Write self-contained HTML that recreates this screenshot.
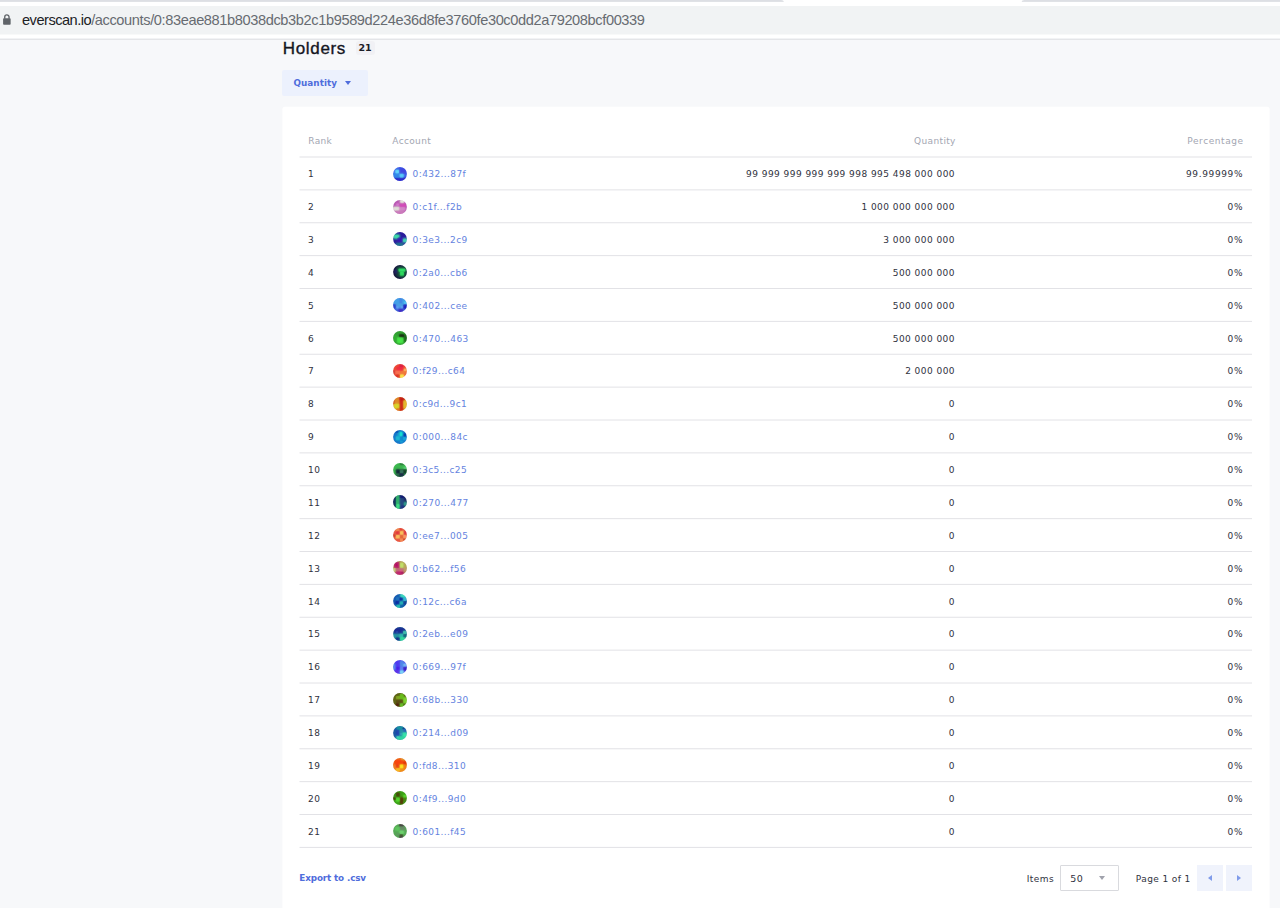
<!DOCTYPE html>
<html lang="en">
<head>
<meta charset="utf-8">
<title>Holders</title>
<style>
html,body{margin:0;padding:0}
body{width:1280px;height:908px;overflow:hidden;position:relative;background:#f7f8fa;font-family:"DejaVu Sans","Liberation Sans",sans-serif;color:#30323e}
.chrome{position:absolute;left:0;top:0}
.url{position:absolute;left:22px;top:10px;height:20px;line-height:20px;font-family:"Liberation Sans",sans-serif;font-size:14.6px;letter-spacing:-0.385px;color:#676b71;white-space:nowrap}
.url b{font-weight:normal;color:#202124;letter-spacing:-0.5px}
h1{position:absolute;left:282.8px;top:36.9px;margin:0;height:24px;line-height:24px;font-family:"Liberation Sans",sans-serif;font-size:17px;font-weight:normal;letter-spacing:.66px;color:#14161f;-webkit-text-stroke:.35px #14161f}
.badge{position:absolute;left:355.5px;top:40.5px;width:19px;height:14.5px;border-radius:3px;background:#f1f1f5;font-size:9.5px;font-weight:bold;line-height:14.5px;text-align:center;color:#1c1e28}
.btn{position:absolute;left:282px;top:69.5px;width:86px;height:26px;background:#ecf1fd;border-radius:2px}
.btn span{position:absolute;left:11.5px;top:0;line-height:26px;font-size:8.8px;font-weight:bold;color:#4f6ddc;letter-spacing:.05px}
.btn i{position:absolute;left:62.6px;top:11.4px;width:0;height:0;border-left:3.8px solid transparent;border-right:3.8px solid transparent;border-top:4.2px solid #4f6ddc}
.card{position:absolute;left:282px;top:106px;width:987.6px;height:802px}
.w{position:absolute;left:.3px;top:.6px;width:987.3px;height:802px}
.th{position:absolute;top:24px;height:20px;line-height:20px;font-size:9px;letter-spacing:.35px;color:#a3a6b2;white-space:nowrap}
.lines{position:absolute;left:0;top:0}
.row{position:absolute;left:17.7px;width:952px;height:31.8px;font-size:9px;letter-spacing:.45px;line-height:31.8px;white-space:nowrap}
.rk{position:absolute;left:8px;top:0}
.ic{position:absolute;left:93.2px;top:7.45px;width:14px;height:14px}
.ac{position:absolute;left:112.6px;top:0;color:#6483e0;letter-spacing:.4px}
.q{position:absolute;right:297px;top:0}
.p{position:absolute;right:8.9px;top:0;letter-spacing:.62px}
.exp{position:absolute;left:17px;top:761.6px;height:20px;line-height:20px;font-size:8.8px;font-weight:bold;color:#4f6ddc;letter-spacing:-.13px}
.items{position:absolute;left:744.5px;top:762px;height:20px;line-height:20px;font-size:9px;letter-spacing:.4px;color:#30323e}
.sel{position:absolute;left:778px;top:758.5px;width:56.5px;height:24px;border:1px solid #d9dade;border-radius:1px;background:#fff}
.sel span{position:absolute;left:9px;top:1px;line-height:24px;font-size:9.5px;letter-spacing:.4px}
.sel i{position:absolute;left:38.1px;top:10.3px;width:0;height:0;border-left:3.6px solid transparent;border-right:3.6px solid transparent;border-top:4px solid #a0a2ac}
.pg{position:absolute;left:853.5px;top:762px;height:20px;line-height:20px;font-size:9px;letter-spacing:.4px}
.nb{position:absolute;top:758.5px;width:25.5px;height:26px;background:#f0f3fc}
.nb i{position:absolute;top:9.6px;width:0;height:0;border-top:3.7px solid transparent;border-bottom:3.7px solid transparent}
.nb.pv{left:915px}.nb.nx{left:944px}
.nb.pv i{left:11px;border-right:4.2px solid #7f9bea}
.nb.nx i{left:10.8px;border-left:4.2px solid #7f9bea}
.r{text-align:right}
</style>
</head>
<body>
<svg width="0" height="0" style="position:absolute"><defs><clipPath id="cc"><circle cx="7" cy="7" r="6.9"/></clipPath><filter id="bl" x="-20%" y="-20%" width="140%" height="140%"><feGaussianBlur stdDeviation="0.8"/></filter></defs></svg>
<svg class="chrome" width="1280" height="41" viewBox="0 0 1280 41"><rect x="0" y="0" width="1280" height="38.6" fill="#fff"/><rect x="0" y="0" width="1280" height="1.9" fill="#dddfe4"/><path d="M781 0h243.500c-1.800 0-2.800 .9-2.800 1.900v.3h-237.900v-.3c0-1-1-1.900-2.800-1.900z" fill="#fff"/><rect x="-20" y="5.900" width="1320" height="28.650" rx="14" fill="#f1f3f4"/><rect x="0" y="38.600" width="1280" height="1.400" fill="#e4e5e8"/><g transform="translate(3.1 13.75)"><path d="M1.650 4.900V3.200a2.150 2.150 0 0 1 4.300 0V4.900" fill="none" stroke="#5f6368" stroke-width="1.350"/><rect x="0" y="4.550" width="7.550" height="6.500" rx=".8" fill="#5f6368"/></g></svg>
<div class="url"><b>everscan.io</b>/accounts/0:83eae881b8038dcb3b2c1b9589d224e36d8fe3760fe30c0dd2a79208bcf00339</div>
<h1>Holders</h1>
<div class="badge">21</div>
<div class="btn"><span>Quantity</span><i></i></div>
<div class="card">
<svg class="lines" width="998" height="802" viewBox="0 0 998 802"><rect x=".4" y=".65" width="987.2" height="900" rx="2.5" fill="#fff"/><rect x="17.5" y="50.50" width="952.5" height="1" fill="#e2e2e6"/><rect x="17.5" y="83.38" width="952.5" height="1" fill="#e2e2e6"/><rect x="17.5" y="116.25" width="952.5" height="1" fill="#e2e2e6"/><rect x="17.5" y="149.13" width="952.5" height="1" fill="#e2e2e6"/><rect x="17.5" y="182.00" width="952.5" height="1" fill="#e2e2e6"/><rect x="17.5" y="214.88" width="952.5" height="1" fill="#e2e2e6"/><rect x="17.5" y="247.76" width="952.5" height="1" fill="#e2e2e6"/><rect x="17.5" y="280.63" width="952.5" height="1" fill="#e2e2e6"/><rect x="17.5" y="313.51" width="952.5" height="1" fill="#e2e2e6"/><rect x="17.5" y="346.38" width="952.5" height="1" fill="#e2e2e6"/><rect x="17.5" y="379.26" width="952.5" height="1" fill="#e2e2e6"/><rect x="17.5" y="412.14" width="952.5" height="1" fill="#e2e2e6"/><rect x="17.5" y="445.01" width="952.5" height="1" fill="#e2e2e6"/><rect x="17.5" y="477.89" width="952.5" height="1" fill="#e2e2e6"/><rect x="17.5" y="510.76" width="952.5" height="1" fill="#e2e2e6"/><rect x="17.5" y="543.64" width="952.5" height="1" fill="#e2e2e6"/><rect x="17.5" y="576.52" width="952.5" height="1" fill="#e2e2e6"/><rect x="17.5" y="609.39" width="952.5" height="1" fill="#e2e2e6"/><rect x="17.5" y="642.27" width="952.5" height="1" fill="#e2e2e6"/><rect x="17.5" y="675.14" width="952.5" height="1" fill="#e2e2e6"/><rect x="17.5" y="708.02" width="952.5" height="1" fill="#e2e2e6"/><rect x="17.5" y="740.90" width="952.5" height="1" fill="#e2e2e6"/></svg>
<div class="w">
<div class="th" style="left:26px">Rank</div><div class="th" style="left:110px">Account</div><div class="th r" style="right:313.8px">Quantity</div><div class="th r" style="right:25.9px;letter-spacing:.58px">Percentage</div>
<div class="row" style="top:52.60px"><span class="rk">1</span><svg class="ic" viewBox="0 0 14 14"><g clip-path="url(#cc)"><g filter="url(#bl)"><rect x="-2" y="-2" width="18" height="18" fill="#3a5ce6"/><rect x="6.4" y="1" width="7.2" height="5.8" rx=".7" fill="#4048e0"/><rect x="0" y="10.7" width="14" height="3.3" rx=".7" fill="#2a20c8"/><rect x="0.5" y="6.2" width="5.9" height="4.5" rx=".7" fill="#3088e8"/><rect x="2.4" y="2.9" width="3.6" height="3.3" rx=".7" fill="#66e2ff"/><rect x="6.7" y="6.8" width="3.9" height="3.6" rx=".7" fill="#5cd4fa"/></g><g opacity=".5"><rect x="6.4" y="1" width="7.2" height="5.8" rx=".7" fill="#4048e0"/><rect x="0" y="10.7" width="14" height="3.3" rx=".7" fill="#2a20c8"/><rect x="0.5" y="6.2" width="5.9" height="4.5" rx=".7" fill="#3088e8"/><rect x="2.4" y="2.9" width="3.6" height="3.3" rx=".7" fill="#66e2ff"/><rect x="6.7" y="6.8" width="3.9" height="3.6" rx=".7" fill="#5cd4fa"/></g></g></svg><span class="ac">0:432...87f</span><span class="q">99 999 999 999 999 998 995 498 000 000</span><span class="p">99.99999%</span></div>
<div class="row" style="top:85.48px"><span class="rk">2</span><svg class="ic" viewBox="0 0 14 14"><g clip-path="url(#cc)"><g filter="url(#bl)"><rect x="-2" y="-2" width="18" height="18" fill="#b656b0"/><rect x="7.2" y="0" width="3.8" height="2.8" rx=".7" fill="#eaf6e4"/><rect x="3.2" y="3.4" width="2.8" height="2" rx=".7" fill="#e080d8"/><rect x="6.8" y="3.4" width="6" height="3.6" rx=".7" fill="#d248b8"/><rect x="0" y="7" width="6.4" height="3.4" rx=".7" fill="#e2e6da"/><rect x="6.6" y="7.2" width="5.8" height="3.2" rx=".7" fill="#d48aca"/><rect x="2.8" y="10.8" width="8.5" height="3.2" rx=".7" fill="#cc7cbc"/></g><g opacity=".5"><rect x="7.2" y="0" width="3.8" height="2.8" rx=".7" fill="#eaf6e4"/><rect x="3.2" y="3.4" width="2.8" height="2" rx=".7" fill="#e080d8"/><rect x="6.8" y="3.4" width="6" height="3.6" rx=".7" fill="#d248b8"/><rect x="0" y="7" width="6.4" height="3.4" rx=".7" fill="#e2e6da"/><rect x="6.6" y="7.2" width="5.8" height="3.2" rx=".7" fill="#d48aca"/><rect x="2.8" y="10.8" width="8.5" height="3.2" rx=".7" fill="#cc7cbc"/></g></g></svg><span class="ac">0:c1f...f2b</span><span class="q">1 000 000 000 000</span><span class="p">0%</span></div>
<div class="row" style="top:118.35px"><span class="rk">3</span><svg class="ic" viewBox="0 0 14 14"><g clip-path="url(#cc)"><g filter="url(#bl)"><rect x="-2" y="-2" width="18" height="18" fill="#2a1c9c"/><rect x="2.9" y="11.2" width="7.5" height="2.8" rx=".7" fill="#207890"/><rect x="0.6" y="2.9" width="5.6" height="3.3" rx=".7" fill="#40e8a8"/><rect x="10" y="6.8" width="4" height="3.2" rx=".7" fill="#48e0b8"/><rect x="4.5" y="5.5" width="5" height="4.5" rx=".7" fill="#3818b0"/></g><g opacity=".5"><rect x="2.9" y="11.2" width="7.5" height="2.8" rx=".7" fill="#207890"/><rect x="0.6" y="2.9" width="5.6" height="3.3" rx=".7" fill="#40e8a8"/><rect x="10" y="6.8" width="4" height="3.2" rx=".7" fill="#48e0b8"/><rect x="4.5" y="5.5" width="5" height="4.5" rx=".7" fill="#3818b0"/></g></g></svg><span class="ac">0:3e3...2c9</span><span class="q">3 000 000 000</span><span class="p">0%</span></div>
<div class="row" style="top:151.23px"><span class="rk">4</span><svg class="ic" viewBox="0 0 14 14"><g clip-path="url(#cc)"><g filter="url(#bl)"><rect x="-2" y="-2" width="18" height="18" fill="#15123e"/><rect x="3.5" y="2" width="10" height="9.5" rx=".7" fill="#173c3a"/><rect x="1.6" y="4.5" width="2.6" height="4" rx=".7" fill="#222264"/><rect x="5.5" y="3.6" width="7" height="3.2" rx=".7" fill="#30e868"/><rect x="6.8" y="6.8" width="4.2" height="3.9" rx=".7" fill="#2ee060"/></g><g opacity=".5"><rect x="3.5" y="2" width="10" height="9.5" rx=".7" fill="#173c3a"/><rect x="1.6" y="4.5" width="2.6" height="4" rx=".7" fill="#222264"/><rect x="5.5" y="3.6" width="7" height="3.2" rx=".7" fill="#30e868"/><rect x="6.8" y="6.8" width="4.2" height="3.9" rx=".7" fill="#2ee060"/></g></g></svg><span class="ac">0:2a0...cb6</span><span class="q">500 000 000</span><span class="p">0%</span></div>
<div class="row" style="top:184.10px"><span class="rk">5</span><svg class="ic" viewBox="0 0 14 14"><g clip-path="url(#cc)"><g filter="url(#bl)"><rect x="-2" y="-2" width="18" height="18" fill="#3a62dc"/><rect x="0" y="0" width="14" height="6" rx=".7" fill="#42a0e8"/><rect x="6.4" y="0.6" width="2.8" height="5" rx=".7" fill="#4484e2"/><rect x="10.8" y="3.4" width="3" height="2.6" rx=".7" fill="#52ccf2"/><rect x="3.2" y="5.5" width="7" height="4" rx=".7" fill="#48a0e2"/><rect x="3.2" y="8.2" width="2.4" height="2.2" rx=".7" fill="#6aa8f8"/><rect x="7.8" y="8" width="2.4" height="2.2" rx=".7" fill="#6aa8f8"/><rect x="0" y="6.2" width="2.6" height="4" rx=".7" fill="#2838c8"/><rect x="10.4" y="6.6" width="3.6" height="4" rx=".7" fill="#1a12b8"/><rect x="5.5" y="11.2" width="4.5" height="2.8" rx=".7" fill="#4222c0"/></g><g opacity=".5"><rect x="0" y="0" width="14" height="6" rx=".7" fill="#42a0e8"/><rect x="6.4" y="0.6" width="2.8" height="5" rx=".7" fill="#4484e2"/><rect x="10.8" y="3.4" width="3" height="2.6" rx=".7" fill="#52ccf2"/><rect x="3.2" y="5.5" width="7" height="4" rx=".7" fill="#48a0e2"/><rect x="3.2" y="8.2" width="2.4" height="2.2" rx=".7" fill="#6aa8f8"/><rect x="7.8" y="8" width="2.4" height="2.2" rx=".7" fill="#6aa8f8"/><rect x="0" y="6.2" width="2.6" height="4" rx=".7" fill="#2838c8"/><rect x="10.4" y="6.6" width="3.6" height="4" rx=".7" fill="#1a12b8"/><rect x="5.5" y="11.2" width="4.5" height="2.8" rx=".7" fill="#4222c0"/></g></g></svg><span class="ac">0:402...cee</span><span class="q">500 000 000</span><span class="p">0%</span></div>
<div class="row" style="top:216.98px"><span class="rk">6</span><svg class="ic" viewBox="0 0 14 14"><g clip-path="url(#cc)"><g filter="url(#bl)"><rect x="-2" y="-2" width="18" height="18" fill="#30a030"/><rect x="0" y="4" width="4" height="6" rx=".7" fill="#34ac34"/><rect x="11" y="3.6" width="3" height="7.1" rx=".7" fill="#1c601c"/><rect x="6.2" y="3.2" width="4.8" height="3" rx=".7" fill="#181810"/><rect x="4.2" y="6.5" width="5.8" height="5.5" rx=".7" fill="#48e848"/></g><g opacity=".5"><rect x="0" y="4" width="4" height="6" rx=".7" fill="#34ac34"/><rect x="11" y="3.6" width="3" height="7.1" rx=".7" fill="#1c601c"/><rect x="6.2" y="3.2" width="4.8" height="3" rx=".7" fill="#181810"/><rect x="4.2" y="6.5" width="5.8" height="5.5" rx=".7" fill="#48e848"/></g></g></svg><span class="ac">0:470...463</span><span class="q">500 000 000</span><span class="p">0%</span></div>
<div class="row" style="top:249.86px"><span class="rk">7</span><svg class="ic" viewBox="0 0 14 14"><g clip-path="url(#cc)"><g filter="url(#bl)"><rect x="-2" y="-2" width="18" height="18" fill="#ec4a34"/><rect x="6.6" y="0.6" width="3.4" height="2.8" rx=".7" fill="#d81848"/><rect x="3.6" y="3" width="6.8" height="3.4" rx=".7" fill="#f02a42"/><rect x="10.8" y="4.7" width="2.8" height="2.4" rx=".7" fill="#fcc462"/><rect x="2.1" y="6.8" width="5.3" height="3.4" rx=".7" fill="#fa7252"/><rect x="7.4" y="7" width="6" height="3.2" rx=".7" fill="#f07a3a"/><rect x="3.2" y="10.6" width="3.6" height="3" rx=".7" fill="#d83222"/><rect x="7" y="10.6" width="3.8" height="3.4" rx=".7" fill="#fcf050"/><rect x="0" y="6.4" width="2.1" height="3.4" rx=".7" fill="#d03a3a"/></g><g opacity=".5"><rect x="6.6" y="0.6" width="3.4" height="2.8" rx=".7" fill="#d81848"/><rect x="3.6" y="3" width="6.8" height="3.4" rx=".7" fill="#f02a42"/><rect x="10.8" y="4.7" width="2.8" height="2.4" rx=".7" fill="#fcc462"/><rect x="2.1" y="6.8" width="5.3" height="3.4" rx=".7" fill="#fa7252"/><rect x="7.4" y="7" width="6" height="3.2" rx=".7" fill="#f07a3a"/><rect x="3.2" y="10.6" width="3.6" height="3" rx=".7" fill="#d83222"/><rect x="7" y="10.6" width="3.8" height="3.4" rx=".7" fill="#fcf050"/><rect x="0" y="6.4" width="2.1" height="3.4" rx=".7" fill="#d03a3a"/></g></g></svg><span class="ac">0:f29...c64</span><span class="q">2 000 000</span><span class="p">0%</span></div>
<div class="row" style="top:282.73px"><span class="rk">8</span><svg class="ic" viewBox="0 0 14 14"><g clip-path="url(#cc)"><g filter="url(#bl)"><rect x="-2" y="-2" width="18" height="18" fill="#dc7c24"/><rect x="0" y="3" width="2.2" height="4" rx=".7" fill="#c84424"/><rect x="1.5" y="1.3" width="5.1" height="5.5" rx=".7" fill="#e08a2a"/><rect x="1" y="6.8" width="5.6" height="4.7" rx=".7" fill="#d8d82a"/><rect x="6.6" y="0" width="3.6" height="14" rx=".7" fill="#cc1c1a"/><rect x="6.4" y="0.2" width="5.3" height="3" rx=".7" fill="#c01218"/><rect x="10.4" y="3.4" width="3.2" height="8.1" rx=".7" fill="#e4c032"/><rect x="3.5" y="11.5" width="3.2" height="2.5" rx=".7" fill="#e07222"/></g><g opacity=".5"><rect x="0" y="3" width="2.2" height="4" rx=".7" fill="#c84424"/><rect x="1.5" y="1.3" width="5.1" height="5.5" rx=".7" fill="#e08a2a"/><rect x="1" y="6.8" width="5.6" height="4.7" rx=".7" fill="#d8d82a"/><rect x="6.6" y="0" width="3.6" height="14" rx=".7" fill="#cc1c1a"/><rect x="6.4" y="0.2" width="5.3" height="3" rx=".7" fill="#c01218"/><rect x="10.4" y="3.4" width="3.2" height="8.1" rx=".7" fill="#e4c032"/><rect x="3.5" y="11.5" width="3.2" height="2.5" rx=".7" fill="#e07222"/></g></g></svg><span class="ac">0:c9d...9c1</span><span class="q">0</span><span class="p">0%</span></div>
<div class="row" style="top:315.61px"><span class="rk">9</span><svg class="ic" viewBox="0 0 14 14"><g clip-path="url(#cc)"><g filter="url(#bl)"><rect x="-2" y="-2" width="18" height="18" fill="#1274ca"/><rect x="2.8" y="1.2" width="2.8" height="1.6" rx=".7" fill="#0a3aa8"/><rect x="4.5" y="2.6" width="2.2" height="3.4" rx=".7" fill="#1aa0d0"/><rect x="6.7" y="2.1" width="2.6" height="4" rx=".7" fill="#12f0d0"/><rect x="10.7" y="3.4" width="2.3" height="3" rx=".7" fill="#0a2aa8"/><rect x="2.8" y="6.2" width="4" height="4" rx=".7" fill="#1cbcd4"/><rect x="7" y="7.2" width="3.2" height="3.4" rx=".7" fill="#108ad0"/><rect x="10.2" y="7" width="2.8" height="3" rx=".7" fill="#18b0e0"/><rect x="7" y="10.8" width="3" height="1.8" rx=".7" fill="#18a8d8"/></g><g opacity=".5"><rect x="2.8" y="1.2" width="2.8" height="1.6" rx=".7" fill="#0a3aa8"/><rect x="4.5" y="2.6" width="2.2" height="3.4" rx=".7" fill="#1aa0d0"/><rect x="6.7" y="2.1" width="2.6" height="4" rx=".7" fill="#12f0d0"/><rect x="10.7" y="3.4" width="2.3" height="3" rx=".7" fill="#0a2aa8"/><rect x="2.8" y="6.2" width="4" height="4" rx=".7" fill="#1cbcd4"/><rect x="7" y="7.2" width="3.2" height="3.4" rx=".7" fill="#108ad0"/><rect x="10.2" y="7" width="2.8" height="3" rx=".7" fill="#18b0e0"/><rect x="7" y="10.8" width="3" height="1.8" rx=".7" fill="#18a8d8"/></g></g></svg><span class="ac">0:000...84c</span><span class="q">0</span><span class="p">0%</span></div>
<div class="row" style="top:348.48px"><span class="rk">10</span><svg class="ic" viewBox="0 0 14 14"><g clip-path="url(#cc)"><g filter="url(#bl)"><rect x="-2" y="-2" width="18" height="18" fill="#3cb850"/><rect x="6.8" y="0.2" width="4" height="1.7" rx=".7" fill="#2a7038"/><rect x="10.6" y="4" width="3" height="2.2" rx=".7" fill="#5ad27a"/><rect x="2.8" y="6.6" width="11.2" height="7.4" rx=".7" fill="#1a3a38"/><rect x="3.2" y="6.6" width="3.4" height="3.6" rx=".7" fill="#101838"/><rect x="10.4" y="6.4" width="3.6" height="3.8" rx=".7" fill="#0e3a20"/><rect x="6.8" y="7.2" width="3.6" height="3" rx=".7" fill="#3a7a62"/><rect x="2.8" y="10.4" width="3.8" height="2" rx=".7" fill="#2f7252"/><rect x="6.8" y="10.6" width="4" height="3.4" rx=".7" fill="#182048"/><rect x="10.8" y="10.4" width="2.2" height="2" rx=".7" fill="#30a050"/></g><g opacity=".5"><rect x="6.8" y="0.2" width="4" height="1.7" rx=".7" fill="#2a7038"/><rect x="10.6" y="4" width="3" height="2.2" rx=".7" fill="#5ad27a"/><rect x="2.8" y="6.6" width="11.2" height="7.4" rx=".7" fill="#1a3a38"/><rect x="3.2" y="6.6" width="3.4" height="3.6" rx=".7" fill="#101838"/><rect x="10.4" y="6.4" width="3.6" height="3.8" rx=".7" fill="#0e3a20"/><rect x="6.8" y="7.2" width="3.6" height="3" rx=".7" fill="#3a7a62"/><rect x="2.8" y="10.4" width="3.8" height="2" rx=".7" fill="#2f7252"/><rect x="6.8" y="10.6" width="4" height="3.4" rx=".7" fill="#182048"/><rect x="10.8" y="10.4" width="2.2" height="2" rx=".7" fill="#30a050"/></g></g></svg><span class="ac">0:3c5...c25</span><span class="q">0</span><span class="p">0%</span></div>
<div class="row" style="top:381.36px"><span class="rk">11</span><svg class="ic" viewBox="0 0 14 14"><g clip-path="url(#cc)"><g filter="url(#bl)"><rect x="-2" y="-2" width="18" height="18" fill="#1a2c64"/><rect x="0" y="0" width="3" height="14" rx=".7" fill="#102858"/><rect x="3" y="0" width="3.6" height="14" rx=".7" fill="#30b46c"/><rect x="3.4" y="9.1" width="3.2" height="4.3" rx=".7" fill="#40e888"/><rect x="6.6" y="0.4" width="3.8" height="2.8" rx=".7" fill="#101078"/><rect x="6.6" y="3.2" width="4.2" height="7.2" rx=".7" fill="#284a82"/><rect x="10.8" y="7.2" width="3" height="3.2" rx=".7" fill="#30a890"/><rect x="6.8" y="10.4" width="4" height="3.2" rx=".7" fill="#203088"/></g><g opacity=".5"><rect x="0" y="0" width="3" height="14" rx=".7" fill="#102858"/><rect x="3" y="0" width="3.6" height="14" rx=".7" fill="#30b46c"/><rect x="3.4" y="9.1" width="3.2" height="4.3" rx=".7" fill="#40e888"/><rect x="6.6" y="0.4" width="3.8" height="2.8" rx=".7" fill="#101078"/><rect x="6.6" y="3.2" width="4.2" height="7.2" rx=".7" fill="#284a82"/><rect x="10.8" y="7.2" width="3" height="3.2" rx=".7" fill="#30a890"/><rect x="6.8" y="10.4" width="4" height="3.2" rx=".7" fill="#203088"/></g></g></svg><span class="ac">0:270...477</span><span class="q">0</span><span class="p">0%</span></div>
<div class="row" style="top:414.24px"><span class="rk">12</span><svg class="ic" viewBox="0 0 14 14"><g clip-path="url(#cc)"><g filter="url(#bl)"><rect x="-2" y="-2" width="18" height="18" fill="#e85c44"/><rect x="2.6" y="0.6" width="4" height="2.4" rx=".7" fill="#f09252"/><rect x="6.6" y="0.2" width="2.6" height="2.2" rx=".7" fill="#e03232"/><rect x="3.2" y="3.2" width="3.4" height="3.4" rx=".7" fill="#e02a3a"/><rect x="7" y="3.2" width="3.4" height="3.4" rx=".7" fill="#fcd262"/><rect x="10.8" y="3.2" width="2.8" height="3.4" rx=".7" fill="#d82a42"/><rect x="0" y="6.6" width="2.6" height="2.6" rx=".7" fill="#c83228"/><rect x="2.8" y="7" width="3.8" height="3.4" rx=".7" fill="#fcc862"/><rect x="7" y="7" width="3" height="3.4" rx=".7" fill="#e06232"/><rect x="10.4" y="7" width="2.8" height="3.4" rx=".7" fill="#fca26a"/><rect x="3.2" y="10.8" width="3.8" height="2.6" rx=".7" fill="#e85242"/><rect x="7" y="10.4" width="3" height="3" rx=".7" fill="#f8925a"/><rect x="10" y="10.4" width="2.6" height="2.2" rx=".7" fill="#c84222"/></g><g opacity=".5"><rect x="2.6" y="0.6" width="4" height="2.4" rx=".7" fill="#f09252"/><rect x="6.6" y="0.2" width="2.6" height="2.2" rx=".7" fill="#e03232"/><rect x="3.2" y="3.2" width="3.4" height="3.4" rx=".7" fill="#e02a3a"/><rect x="7" y="3.2" width="3.4" height="3.4" rx=".7" fill="#fcd262"/><rect x="10.8" y="3.2" width="2.8" height="3.4" rx=".7" fill="#d82a42"/><rect x="0" y="6.6" width="2.6" height="2.6" rx=".7" fill="#c83228"/><rect x="2.8" y="7" width="3.8" height="3.4" rx=".7" fill="#fcc862"/><rect x="7" y="7" width="3" height="3.4" rx=".7" fill="#e06232"/><rect x="10.4" y="7" width="2.8" height="3.4" rx=".7" fill="#fca26a"/><rect x="3.2" y="10.8" width="3.8" height="2.6" rx=".7" fill="#e85242"/><rect x="7" y="10.4" width="3" height="3" rx=".7" fill="#f8925a"/><rect x="10" y="10.4" width="2.6" height="2.2" rx=".7" fill="#c84222"/></g></g></svg><span class="ac">0:ee7...005</span><span class="q">0</span><span class="p">0%</span></div>
<div class="row" style="top:447.11px"><span class="rk">13</span><svg class="ic" viewBox="0 0 14 14"><g clip-path="url(#cc)"><g filter="url(#bl)"><rect x="-2" y="-2" width="18" height="18" fill="#b4905c"/><rect x="1" y="1" width="5.6" height="6" rx=".7" fill="#b80a68"/><rect x="6.6" y="0.2" width="7" height="7" rx=".7" fill="#b4aa5a"/><rect x="7" y="1.7" width="3.4" height="5.1" rx=".7" fill="#c2e66a"/><rect x="10.4" y="6.8" width="3.6" height="3.8" rx=".7" fill="#c09a6a"/><rect x="0" y="7" width="2.6" height="3.6" rx=".7" fill="#c8e082"/><rect x="2.6" y="7.2" width="8" height="3" rx=".7" fill="#c06a7a"/><rect x="6.4" y="9" width="2.8" height="1.8" rx=".7" fill="#e0628a"/><rect x="2.6" y="10.6" width="8" height="3.4" rx=".7" fill="#c01a72"/><rect x="8.2" y="11" width="2.2" height="1.8" rx=".7" fill="#a00a5a"/></g><g opacity=".5"><rect x="1" y="1" width="5.6" height="6" rx=".7" fill="#b80a68"/><rect x="6.6" y="0.2" width="7" height="7" rx=".7" fill="#b4aa5a"/><rect x="7" y="1.7" width="3.4" height="5.1" rx=".7" fill="#c2e66a"/><rect x="10.4" y="6.8" width="3.6" height="3.8" rx=".7" fill="#c09a6a"/><rect x="0" y="7" width="2.6" height="3.6" rx=".7" fill="#c8e082"/><rect x="2.6" y="7.2" width="8" height="3" rx=".7" fill="#c06a7a"/><rect x="6.4" y="9" width="2.8" height="1.8" rx=".7" fill="#e0628a"/><rect x="2.6" y="10.6" width="8" height="3.4" rx=".7" fill="#c01a72"/><rect x="8.2" y="11" width="2.2" height="1.8" rx=".7" fill="#a00a5a"/></g></g></svg><span class="ac">0:b62...f56</span><span class="q">0</span><span class="p">0%</span></div>
<div class="row" style="top:479.99px"><span class="rk">14</span><svg class="ic" viewBox="0 0 14 14"><g clip-path="url(#cc)"><g filter="url(#bl)"><rect x="-2" y="-2" width="18" height="18" fill="#1858b0"/><rect x="3" y="3.2" width="3.6" height="3" rx=".7" fill="#2078c0"/><rect x="6.6" y="3.4" width="3" height="2.8" rx=".7" fill="#0818a0"/><rect x="2.6" y="7" width="3.6" height="3.4" rx=".7" fill="#0820a0"/><rect x="7.4" y="0" width="6.2" height="3.2" rx=".7" fill="#40e0c0"/><rect x="10.4" y="3.6" width="2.8" height="3.4" rx=".7" fill="#38c8d8"/><rect x="6.8" y="7.4" width="3.2" height="3" rx=".7" fill="#28c0b8"/><rect x="10.4" y="7" width="3.6" height="3.4" rx=".7" fill="#103890"/><rect x="3.6" y="10.8" width="3.4" height="3.2" rx=".7" fill="#28c8b0"/><rect x="7" y="10.8" width="4" height="3" rx=".7" fill="#1060a8"/></g><g opacity=".5"><rect x="3" y="3.2" width="3.6" height="3" rx=".7" fill="#2078c0"/><rect x="6.6" y="3.4" width="3" height="2.8" rx=".7" fill="#0818a0"/><rect x="2.6" y="7" width="3.6" height="3.4" rx=".7" fill="#0820a0"/><rect x="7.4" y="0" width="6.2" height="3.2" rx=".7" fill="#40e0c0"/><rect x="10.4" y="3.6" width="2.8" height="3.4" rx=".7" fill="#38c8d8"/><rect x="6.8" y="7.4" width="3.2" height="3" rx=".7" fill="#28c0b8"/><rect x="10.4" y="7" width="3.6" height="3.4" rx=".7" fill="#103890"/><rect x="3.6" y="10.8" width="3.4" height="3.2" rx=".7" fill="#28c8b0"/><rect x="7" y="10.8" width="4" height="3" rx=".7" fill="#1060a8"/></g></g></svg><span class="ac">0:12c...c6a</span><span class="q">0</span><span class="p">0%</span></div>
<div class="row" style="top:512.86px"><span class="rk">15</span><svg class="ic" viewBox="0 0 14 14"><g clip-path="url(#cc)"><g filter="url(#bl)"><rect x="-2" y="-2" width="18" height="18" fill="#2898a0"/><rect x="0" y="0" width="14" height="6.4" rx=".7" fill="#1a2a92"/><rect x="2.8" y="4" width="2.2" height="2" rx=".7" fill="#2848b0"/><rect x="10" y="3.7" width="3.6" height="3.3" rx=".7" fill="#40c8b0"/><rect x="6.6" y="6.7" width="3.6" height="3.2" rx=".7" fill="#30b8b0"/><rect x="10.4" y="7" width="3.6" height="3.5" rx=".7" fill="#105878"/><rect x="2.8" y="10.5" width="3.8" height="3.2" rx=".7" fill="#101888"/><rect x="7" y="10" width="3.8" height="3.6" rx=".7" fill="#30e098"/><rect x="10.8" y="10.4" width="2.4" height="2.2" rx=".7" fill="#48d8a8"/></g><g opacity=".5"><rect x="0" y="0" width="14" height="6.4" rx=".7" fill="#1a2a92"/><rect x="2.8" y="4" width="2.2" height="2" rx=".7" fill="#2848b0"/><rect x="10" y="3.7" width="3.6" height="3.3" rx=".7" fill="#40c8b0"/><rect x="6.6" y="6.7" width="3.6" height="3.2" rx=".7" fill="#30b8b0"/><rect x="10.4" y="7" width="3.6" height="3.5" rx=".7" fill="#105878"/><rect x="2.8" y="10.5" width="3.8" height="3.2" rx=".7" fill="#101888"/><rect x="7" y="10" width="3.8" height="3.6" rx=".7" fill="#30e098"/><rect x="10.8" y="10.4" width="2.4" height="2.2" rx=".7" fill="#48d8a8"/></g></g></svg><span class="ac">0:2eb...e09</span><span class="q">0</span><span class="p">0%</span></div>
<div class="row" style="top:545.74px"><span class="rk">16</span><svg class="ic" viewBox="0 0 14 14"><g clip-path="url(#cc)"><g filter="url(#bl)"><rect x="-2" y="-2" width="18" height="18" fill="#5648ec"/><rect x="0" y="4" width="2.6" height="5.6" rx=".7" fill="#5890e8"/><rect x="2.6" y="1" width="4.4" height="10" rx=".7" fill="#5038f0"/><rect x="3.2" y="6.7" width="3.4" height="3" rx=".7" fill="#4818e8"/><rect x="7" y="1" width="3.8" height="5.7" rx=".7" fill="#5088e8"/><rect x="10.4" y="3.7" width="3" height="3" rx=".7" fill="#78c8f8"/><rect x="7" y="6.7" width="3.4" height="3.8" rx=".7" fill="#6080f8"/><rect x="10.4" y="6.7" width="3.6" height="3.8" rx=".7" fill="#3810c0"/><rect x="7" y="10.5" width="3.4" height="3.2" rx=".7" fill="#80e8f8"/><rect x="1.5" y="10.5" width="5" height="2.6" rx=".7" fill="#6030e8"/></g><g opacity=".5"><rect x="0" y="4" width="2.6" height="5.6" rx=".7" fill="#5890e8"/><rect x="2.6" y="1" width="4.4" height="10" rx=".7" fill="#5038f0"/><rect x="3.2" y="6.7" width="3.4" height="3" rx=".7" fill="#4818e8"/><rect x="7" y="1" width="3.8" height="5.7" rx=".7" fill="#5088e8"/><rect x="10.4" y="3.7" width="3" height="3" rx=".7" fill="#78c8f8"/><rect x="7" y="6.7" width="3.4" height="3.8" rx=".7" fill="#6080f8"/><rect x="10.4" y="6.7" width="3.6" height="3.8" rx=".7" fill="#3810c0"/><rect x="7" y="10.5" width="3.4" height="3.2" rx=".7" fill="#80e8f8"/><rect x="1.5" y="10.5" width="5" height="2.6" rx=".7" fill="#6030e8"/></g></g></svg><span class="ac">0:669...97f</span><span class="q">0</span><span class="p">0%</span></div>
<div class="row" style="top:578.62px"><span class="rk">17</span><svg class="ic" viewBox="0 0 14 14"><g clip-path="url(#cc)"><g filter="url(#bl)"><rect x="-2" y="-2" width="18" height="18" fill="#62701a"/><rect x="0" y="0" width="14" height="3.2" rx=".7" fill="#5a5c12"/><rect x="0" y="3" width="3" height="8" rx=".7" fill="#5e6414"/><rect x="3" y="3.1" width="4" height="3.4" rx=".7" fill="#84a822"/><rect x="6.8" y="0.8" width="4" height="5.7" rx=".7" fill="#68c01a"/><rect x="10.4" y="4.4" width="3.6" height="6" rx=".7" fill="#80d832"/><rect x="3.2" y="6.5" width="6.8" height="3.6" rx=".7" fill="#5a4a12"/><rect x="2.8" y="10.4" width="3.8" height="3" rx=".7" fill="#50120a"/><rect x="6.8" y="10.4" width="3.2" height="3.4" rx=".7" fill="#68c82a"/><rect x="10" y="10.4" width="2.6" height="2.2" rx=".7" fill="#487212"/></g><g opacity=".5"><rect x="0" y="0" width="14" height="3.2" rx=".7" fill="#5a5c12"/><rect x="0" y="3" width="3" height="8" rx=".7" fill="#5e6414"/><rect x="3" y="3.1" width="4" height="3.4" rx=".7" fill="#84a822"/><rect x="6.8" y="0.8" width="4" height="5.7" rx=".7" fill="#68c01a"/><rect x="10.4" y="4.4" width="3.6" height="6" rx=".7" fill="#80d832"/><rect x="3.2" y="6.5" width="6.8" height="3.6" rx=".7" fill="#5a4a12"/><rect x="2.8" y="10.4" width="3.8" height="3" rx=".7" fill="#50120a"/><rect x="6.8" y="10.4" width="3.2" height="3.4" rx=".7" fill="#68c82a"/><rect x="10" y="10.4" width="2.6" height="2.2" rx=".7" fill="#487212"/></g></g></svg><span class="ac">0:68b...330</span><span class="q">0</span><span class="p">0%</span></div>
<div class="row" style="top:611.49px"><span class="rk">18</span><svg class="ic" viewBox="0 0 14 14"><g clip-path="url(#cc)"><g filter="url(#bl)"><rect x="-2" y="-2" width="18" height="18" fill="#1a56a2"/><rect x="3.6" y="0.4" width="6.8" height="3" rx=".7" fill="#1898a0"/><rect x="9" y="2.1" width="4" height="4.3" rx=".7" fill="#2868b8"/><rect x="9.5" y="1.8" width="1.8" height="1.2" rx=".7" fill="#082868"/><rect x="3.4" y="4" width="2.8" height="5.8" rx=".7" fill="#2040b0"/><rect x="6.6" y="3.4" width="3.8" height="5.6" rx=".7" fill="#2890a8"/><rect x="6.8" y="7" width="2.4" height="2" rx=".7" fill="#38a8b8"/><rect x="9.5" y="6.4" width="4.5" height="5.6" rx=".7" fill="#38e8a8"/><rect x="3.6" y="10.2" width="8.4" height="3.8" rx=".7" fill="#30d8a0"/><rect x="3.6" y="10.6" width="2.2" height="1" rx=".7" fill="#60e8d8"/></g><g opacity=".5"><rect x="3.6" y="0.4" width="6.8" height="3" rx=".7" fill="#1898a0"/><rect x="9" y="2.1" width="4" height="4.3" rx=".7" fill="#2868b8"/><rect x="9.5" y="1.8" width="1.8" height="1.2" rx=".7" fill="#082868"/><rect x="3.4" y="4" width="2.8" height="5.8" rx=".7" fill="#2040b0"/><rect x="6.6" y="3.4" width="3.8" height="5.6" rx=".7" fill="#2890a8"/><rect x="6.8" y="7" width="2.4" height="2" rx=".7" fill="#38a8b8"/><rect x="9.5" y="6.4" width="4.5" height="5.6" rx=".7" fill="#38e8a8"/><rect x="3.6" y="10.2" width="8.4" height="3.8" rx=".7" fill="#30d8a0"/><rect x="3.6" y="10.6" width="2.2" height="1" rx=".7" fill="#60e8d8"/></g></g></svg><span class="ac">0:214...d09</span><span class="q">0</span><span class="p">0%</span></div>
<div class="row" style="top:644.37px"><span class="rk">19</span><svg class="ic" viewBox="0 0 14 14"><g clip-path="url(#cc)"><g filter="url(#bl)"><rect x="-2" y="-2" width="18" height="18" fill="#ec6a1c"/><rect x="1.5" y="2.1" width="9" height="4.3" rx=".7" fill="#f8420f"/><rect x="10.4" y="3.4" width="2.8" height="3" rx=".7" fill="#e02a0a"/><rect x="8" y="0.4" width="4" height="1.8" rx=".7" fill="#e0a030"/><rect x="2.8" y="6.4" width="3.8" height="3.4" rx=".7" fill="#e83a12"/><rect x="0" y="6.4" width="2.8" height="4.2" rx=".7" fill="#f07a22"/><rect x="6.8" y="6.6" width="3.6" height="3.6" rx=".7" fill="#fcf020"/><rect x="10.4" y="6.6" width="3" height="4" rx=".7" fill="#f08218"/><rect x="2.8" y="10.2" width="4.2" height="3" rx=".7" fill="#f8c222"/><rect x="7" y="10.4" width="5" height="3" rx=".7" fill="#f09218"/></g><g opacity=".5"><rect x="1.5" y="2.1" width="9" height="4.3" rx=".7" fill="#f8420f"/><rect x="10.4" y="3.4" width="2.8" height="3" rx=".7" fill="#e02a0a"/><rect x="8" y="0.4" width="4" height="1.8" rx=".7" fill="#e0a030"/><rect x="2.8" y="6.4" width="3.8" height="3.4" rx=".7" fill="#e83a12"/><rect x="0" y="6.4" width="2.8" height="4.2" rx=".7" fill="#f07a22"/><rect x="6.8" y="6.6" width="3.6" height="3.6" rx=".7" fill="#fcf020"/><rect x="10.4" y="6.6" width="3" height="4" rx=".7" fill="#f08218"/><rect x="2.8" y="10.2" width="4.2" height="3" rx=".7" fill="#f8c222"/><rect x="7" y="10.4" width="5" height="3" rx=".7" fill="#f09218"/></g></g></svg><span class="ac">0:fd8...310</span><span class="q">0</span><span class="p">0%</span></div>
<div class="row" style="top:677.24px"><span class="rk">20</span><svg class="ic" viewBox="0 0 14 14"><g clip-path="url(#cc)"><g filter="url(#bl)"><rect x="-2" y="-2" width="18" height="18" fill="#3aa012"/><rect x="3.2" y="1.5" width="3.4" height="4.2" rx=".7" fill="#4a3a0a"/><rect x="10.4" y="4" width="2.8" height="2.6" rx=".7" fill="#60e030"/><rect x="0" y="6.6" width="2.6" height="2.5" rx=".7" fill="#4a2a0a"/><rect x="3" y="6.8" width="3.6" height="3.6" rx=".7" fill="#58e030"/><rect x="6.8" y="5.6" width="3" height="1.4" rx=".7" fill="#4a7a14"/><rect x="7" y="6.6" width="3" height="6.6" rx=".7" fill="#582a0a"/><rect x="10" y="6.8" width="3.4" height="3.6" rx=".7" fill="#4a8012"/></g><g opacity=".5"><rect x="3.2" y="1.5" width="3.4" height="4.2" rx=".7" fill="#4a3a0a"/><rect x="10.4" y="4" width="2.8" height="2.6" rx=".7" fill="#60e030"/><rect x="0" y="6.6" width="2.6" height="2.5" rx=".7" fill="#4a2a0a"/><rect x="3" y="6.8" width="3.6" height="3.6" rx=".7" fill="#58e030"/><rect x="6.8" y="5.6" width="3" height="1.4" rx=".7" fill="#4a7a14"/><rect x="7" y="6.6" width="3" height="6.6" rx=".7" fill="#582a0a"/><rect x="10" y="6.8" width="3.4" height="3.6" rx=".7" fill="#4a8012"/></g></g></svg><span class="ac">0:4f9...9d0</span><span class="q">0</span><span class="p">0%</span></div>
<div class="row" style="top:710.12px"><span class="rk">21</span><svg class="ic" viewBox="0 0 14 14"><g clip-path="url(#cc)"><g filter="url(#bl)"><rect x="-2" y="-2" width="18" height="18" fill="#54a854"/><rect x="6.2" y="0" width="4.6" height="2.2" rx=".7" fill="#482840"/><rect x="7" y="2.7" width="5" height="3.3" rx=".7" fill="#688a68"/><rect x="2.1" y="2.9" width="4.5" height="3.6" rx=".7" fill="#60c860"/><rect x="6.6" y="6.7" width="4.2" height="3.2" rx=".7" fill="#70d870"/><rect x="3.2" y="9" width="3.4" height="2.6" rx=".7" fill="#609a60"/><rect x="6.6" y="10.3" width="3.4" height="2" rx=".7" fill="#3a4a22"/><rect x="6.2" y="12.2" width="4" height="1.8" rx=".7" fill="#502848"/></g><g opacity=".5"><rect x="6.2" y="0" width="4.6" height="2.2" rx=".7" fill="#482840"/><rect x="7" y="2.7" width="5" height="3.3" rx=".7" fill="#688a68"/><rect x="2.1" y="2.9" width="4.5" height="3.6" rx=".7" fill="#60c860"/><rect x="6.6" y="6.7" width="4.2" height="3.2" rx=".7" fill="#70d870"/><rect x="3.2" y="9" width="3.4" height="2.6" rx=".7" fill="#609a60"/><rect x="6.6" y="10.3" width="3.4" height="2" rx=".7" fill="#3a4a22"/><rect x="6.2" y="12.2" width="4" height="1.8" rx=".7" fill="#502848"/></g></g></svg><span class="ac">0:601...f45</span><span class="q">0</span><span class="p">0%</span></div>
<div class="exp">Export to .csv</div>
<div class="items">Items</div>
<div class="sel"><span>50</span><i></i></div>
<div class="pg">Page 1 of 1</div>
<div class="nb pv"><i></i></div>
<div class="nb nx"><i></i></div>
</div>
</div>
</body>
</html>
